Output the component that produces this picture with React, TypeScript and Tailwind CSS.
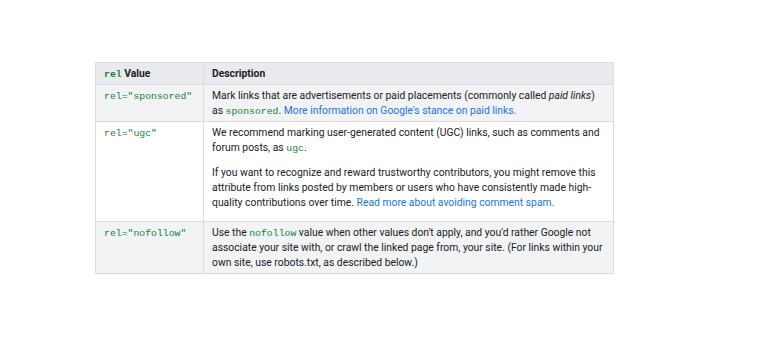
import React from 'react';

const Code = ({ children }: { children: React.ReactNode }) => (
  <code className="font-['Liberation_Mono',monospace] text-[9.8px] leading-none text-[#188038]">{children}</code>
);

const Link = ({ children }: { children: React.ReactNode }) => (
  <a className="text-[#1a73e8] no-underline">{children}</a>
);

export default function App() {
  return (
    <div className="w-[767px] h-[363px] bg-white pt-[62px] pl-[95px] font-['Roboto',sans-serif] text-[10.35px] leading-[15px] text-[#202124]">
      <table className="w-[519px] border-collapse border border-[#dadce0]">
        <thead>
          <tr className="bg-[#e8eaed]">
            <th className="w-[108px] border border-[#dadce0] px-[8px] py-[3px] text-left font-bold">
              <Code>rel</Code> Value
            </th>
            <th className="border border-[#dadce0] px-[8px] py-[3px] text-left font-bold">Description</th>
          </tr>
        </thead>
        <tbody>
          <tr className="bg-[#f1f3f4]">
            <td className="border border-[#dadce0] px-[8px] pt-[3px] pb-[3px] align-top">
              <Code>rel="sponsored"</Code>
            </td>
            <td className="border border-[#dadce0] px-[8px] pt-[3px] pb-[3px] align-top">
              Mark links that are advertisements or paid placements (commonly called <em>paid links</em>) as{' '}
              <Code>sponsored</Code>. <Link>More information on Google's stance on paid links.</Link>
            </td>
          </tr>
          <tr className="bg-white">
            <td className="border border-[#dadce0] px-[8px] pt-[3px] pb-[3px] align-top">
              <Code>rel="ugc"</Code>
            </td>
            <td className="border border-[#dadce0] px-[8px] pt-[3px] pb-[3px] align-top">
              <p className="mb-[10px]">
                We recommend marking user-generated content (UGC) links, such as comments and forum posts, as{' '}
                <Code>ugc</Code>.
              </p>
              <p className="mb-[8px]">
                If you want to recognize and reward trustworthy contributors, you might remove this attribute from
                links posted by members or users who have consistently made high-quality contributions over time.{' '}
                <Link>Read more about avoiding comment spam.</Link>
              </p>
            </td>
          </tr>
          <tr className="bg-[#f1f3f4]">
            <td className="border border-[#dadce0] px-[8px] pt-[3px] pb-[3px] align-top">
              <Code>rel="nofollow"</Code>
            </td>
            <td className="border border-[#dadce0] px-[8px] pt-[3px] pb-[3px] align-top">
              Use the <Code>nofollow</Code> value when other values don't apply, and you'd rather Google not
              associate your site with, or crawl the linked page from, your site. (For links within your own site,
              use robots.txt, as described below.)
            </td>
          </tr>
        </tbody>
      </table>
    </div>
  );
}
